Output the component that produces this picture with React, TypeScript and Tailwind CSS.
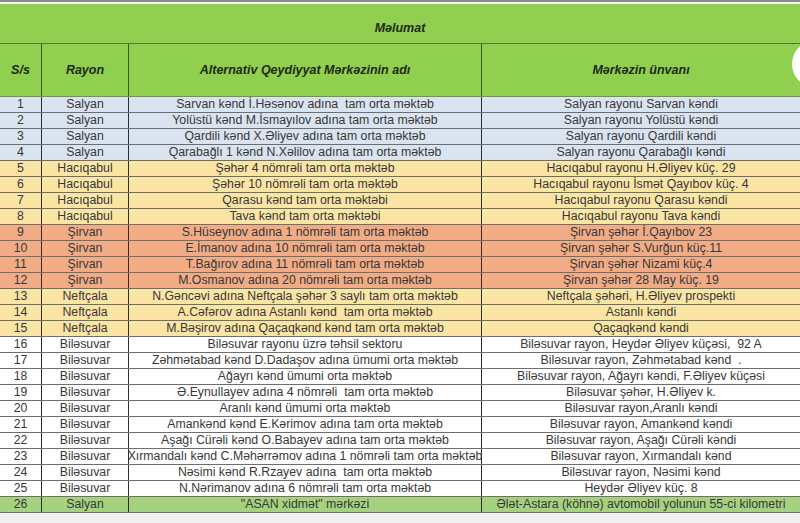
import React from "react";

type Row = [string, string, string, string, string];

const BLUE = "bg-[#dae3f0]";
const YEL = "bg-[#fbe5a4]";
const ORG = "bg-[#f1ab85]";
const WHT = "bg-white";
const GRN = "bg-[#a6d27f]";

const rows: Row[] = [
  ["1", "Salyan", "Sarvan kənd İ.Həsənov adına  tam orta məktəb", "Salyan rayonu Sarvan kəndi", BLUE],
  ["2", "Salyan", "Yolüstü kənd M.İsmayılov adına tam orta məktəb", "Salyan rayonu Yolüstü kəndi", BLUE],
  ["3", "Salyan", "Qardili kənd X.Əliyev adına tam orta məktəb", "Salyan rayonu Qardili kəndi", BLUE],
  ["4", "Salyan", "Qarabağlı 1 kənd N.Xəlilov adına tam orta məktəb", "Salyan rayonu Qarabağlı kəndi", BLUE],
  ["5", "Hacıqabul", "Şəhər 4 nömrəli tam orta məktəb", "Hacıqabul rayonu H.Əliyev küç. 29", YEL],
  ["6", "Hacıqabul", "Şəhər 10 nömrəli tam orta məktəb", "Hacıqabul rayonu İsmət Qayıbov küç. 4", YEL],
  ["7", "Hacıqabul", "Qarasu kənd tam orta məktəbi", "Hacıqabul rayonu Qarasu kəndi", YEL],
  ["8", "Hacıqabul", "Tava kənd tam orta məktəbi", "Hacıqabul rayonu Tava kəndi", YEL],
  ["9", "Şirvan", "S.Hüseynov adına 1 nömrəli tam orta məktəb", "Şirvan şəhər İ.Qayıbov 23", ORG],
  ["10", "Şirvan", "E.İmanov adına 10 nömrəli tam orta məktəb", "Şirvan şəhər S.Vurğun küç.11", ORG],
  ["11", "Şirvan", "T.Bağırov adına 11 nömrəli tam orta məktəb", "Şirvan şəhər Nizami küç.4", ORG],
  ["12", "Şirvan", "M.Osmanov adına 20 nömrəli tam orta məktəb", "Şirvan şəhər 28 May küç. 19", ORG],
  ["13", "Neftçala", "N.Gəncəvi adına Neftçala şəhər 3 saylı tam orta məktəb", "Neftçala şəhəri, H.Əliyev prospekti", YEL],
  ["14", "Neftçala", "A.Cəfərov adına Astanlı kənd  tam orta məktəb", "Astanlı kəndi", YEL],
  ["15", "Neftçala", "M.Bəşirov adına Qaçaqkənd kənd tam orta məktəb", "Qaçaqkənd kəndi", YEL],
  ["16", "Biləsuvar", "Biləsuvar rayonu üzrə təhsil sektoru", "Biləsuvar rayon, Heydər Əliyev küçəsi,  92 A", WHT],
  ["17", "Biləsuvar", "Zəhmətabad kənd D.Dadaşov adına ümumi orta məktəb", "Biləsuvar rayon, Zəhmətabad kənd  .", WHT],
  ["18", "Biləsuvar", "Ağayrı kənd ümumi orta məktəb", "Biləsuvar rayon, Ağayrı kəndi, F.Əliyev küçəsi", WHT],
  ["19", "Biləsuvar", "Ə.Eynullayev adına 4 nömrəli  tam orta məktəb", "Biləsuvar şəhər, H.Əliyev k.", WHT],
  ["20", "Biləsuvar", "Aranlı kənd ümumi orta məktəb", "Biləsuvar rayon,Aranlı kəndi", WHT],
  ["21", "Biləsuvar", "Amankənd kənd E.Kərimov adına tam orta məktəb", "Biləsuvar rayon, Amankənd kəndi", WHT],
  ["22", "Biləsuvar", "Aşağı Cürəli kənd O.Babayev adına tam orta məktəb", "Biləsuvar rayon, Aşağı Cürəli kəndi", WHT],
  ["23", "Biləsuvar", "Xırmandalı kənd C.Məhərrəmov adına 1 nömrəli tam orta məktəb", "Biləsuvar rayon, Xırmandalı kənd", WHT],
  ["24", "Biləsuvar", "Nəsimi kənd R.Rzayev adına  tam orta məktəb", "Biləsuvar rayon, Nəsimi kənd", WHT],
  ["25", "Biləsuvar", "N.Nərimanov adına 6 nömrəli tam orta məktəb", "Heydər Əliyev küç. 8", WHT],
  ["26", "Salyan", "\"ASAN xidmət\" mərkəzi", "Ələt-Astara (köhnə) avtomobil yolunun 55-ci kilometri", GRN],
];

export default function App() {
  return (
    <div
      className="relative w-[800px] h-[523px] overflow-hidden bg-[#eef0f1] text-[#383838]"
      style={{ fontFamily: '"Liberation Sans", Arial, sans-serif' }}
    >
      <div className="h-[2px] bg-[#8d8d8d]" />
      <div className="h-[2px] bg-[#f4f4f4]" />
      <div className="bg-[#90cf50] text-[#1f2a12]">
        <div className="h-[40px] flex items-end justify-center pb-[5px] text-[12.5px] font-bold italic border-b border-[#4f7a2a]">
          Məlumat
        </div>
        <div className="grid grid-cols-[42px_87px_353px_318px] h-[53px] text-[12.5px] font-bold italic border-b border-[#6a9a3a]">
          <div className="flex items-center justify-center border-r border-[#3d5a22]">S/s</div>
          <div className="flex items-center justify-center border-r border-[#3d5a22]">Rayon</div>
          <div className="flex items-center justify-center border-r border-[#3d5a22]">Alternativ Qeydiyyat Mərkəzinin adı</div>
          <div className="flex items-center justify-center">Mərkəzin ünvanı</div>
        </div>
      </div>
      <div className="text-[12.3px] leading-none">
        {rows.map((r) => (
          <div
            key={r[0]}
            className={`grid grid-cols-[42px_87px_353px_318px] h-[16px] border-b border-[#6e6e6e] ${r[4]}`}
          >
            <div className="flex items-center justify-center border-r border-[#2e2e2e]">{r[0]}</div>
            <div className="flex items-center justify-center border-r border-[#2e2e2e]">{r[1]}</div>
            <div className="flex items-center justify-center border-r border-[#2e2e2e] whitespace-pre overflow-hidden">{r[2]}</div>
            <div className="flex items-center justify-center whitespace-pre overflow-hidden">{r[3]}</div>
          </div>
        ))}
      </div>
      <div className="absolute right-[-40px] top-[40px] w-[48px] h-[48px] rounded-full bg-white" />
    </div>
  );
}
